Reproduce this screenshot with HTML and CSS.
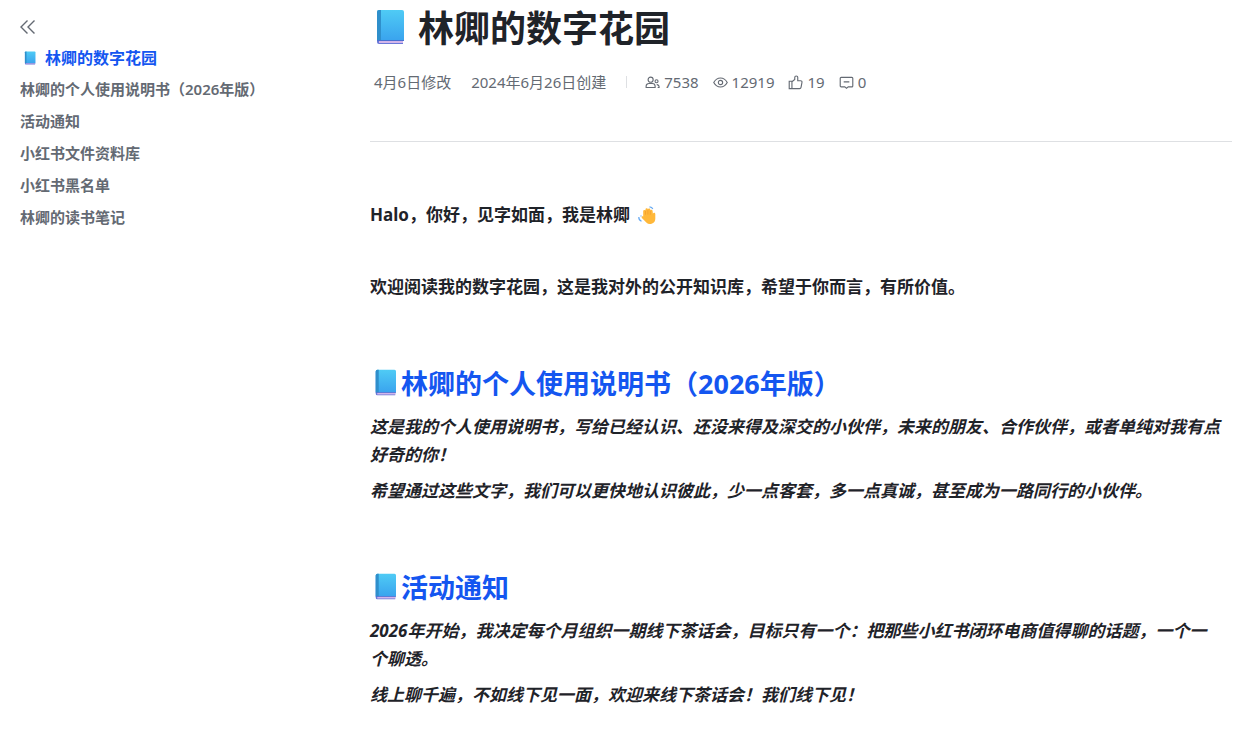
FILE: index.html
```html
<!DOCTYPE html>
<html lang="zh-CN">
  <head>
    <meta charset="UTF-8" />
    <title>林卿的数字花园</title>
    <meta name="viewport" content="width=device-width, initial-scale=1" />
    <link rel="stylesheet" href="styles.css">
  </head>
  <body>
    <svg class="defs" width="0" height="0" aria-hidden="true">
      <defs>
        <linearGradient id="cover" x1="0" y1="0" x2="0" y2="1">
          <stop offset="0" stop-color="#4fcbf5" />
          <stop offset="1" stop-color="#3aa4ee" />
        </linearGradient>
        <symbol id="book" viewBox="0 0 28 36">
          <path d="M1 4h26v31H3a2 2 0 0 1-2-2z" fill="#6a78d8" />
          <path d="M3 31h24v3H3z" fill="#d3b5ea" />
          <path d="M3 1h23a2 2 0 0 1 2 2v28H1V3a2 2 0 0 1 2-2z" fill="url(#cover)" />
          <path d="M3 1h2v30H1V3a2 2 0 0 1 2-2z" fill="#2f8fcb" />
          <path d="M1 31h27v1H1z" fill="#4a6fd0" />
        </symbol>
      </defs>
    </svg>

    <div class="page">
      <aside class="sidebar">
        <button class="collapse" aria-label="收起目录">
          <svg width="16" height="16" viewBox="0 0 16 16">
            <path d="M7.500 1.500L1 8l6.500 6.500M14.500 1.500L8 8l6.500 6.500" />
          </svg>
        </button>
        <nav class="toc">
          <a class="toc-title" href="#top"><svg class="book"><use href="#book" /></svg>林卿的数字花园</a>
          <a href="#manual">林卿的个人使用说明书（2026年版）</a>
          <a href="#events">活动通知</a>
          <a href="#library">小红书文件资料库</a>
          <a href="#blacklist">小红书黑名单</a>
          <a href="#notes">林卿的读书笔记</a>
        </nav>
      </aside>

      <main class="doc" id="top">
        <h1><svg class="book"><use href="#book" /></svg>林卿的数字花园</h1>
        <div class="meta">
          <span class="date">4月6日修改</span>
          <span class="date">2024年6月26日创建</span>
          <span class="divider"></span>
          <ul class="stats">
            <li>
              <svg viewBox="0 0 16 16">
                <circle cx="6" cy="5" r="2.700" />
                <path d="M1.200 13.300v-1.300a3 3 0 0 1 3-3h3.600a3 3 0 0 1 3 3v1.300z" />
                <circle cx="12.300" cy="6.700" r="1.600" />
                <path d="M12.500 10.300a2.300 2.300 0 0 1 2.500 2.300v.7h-1.500" />
              </svg>
              7538
            </li>
            <li>
              <svg viewBox="0 0 16 16">
                <path d="M.8 8C2.600 4.800 5 3.200 8 3.200S13.400 4.800 15.200 8C13.400 11.200 11 12.800 8 12.800S2.600 11.200.8 8z" />
                <circle cx="8" cy="8" r="2.300" />
              </svg>
              12919
            </li>
            <li>
              <svg viewBox="0 0 16 16">
                <path d="M1.300 6.700h2.900v7.800H1.300zM4.200 7.200L7.200 4.800V2.600a1.600 1.600 0 0 1 3.200 0v3.500h3a1.500 1.500 0 0 1 1.500 1.800l-1 5.300a1.600 1.600 0 0 1-1.600 1.300H4.200" />
              </svg>
              19
            </li>
            <li>
              <svg viewBox="0 0 16 16">
                <path d="M2.300 2.500h11.400a1 1 0 0 1 1 1v8.200a1 1 0 0 1-1 1H9.800L8 14.200l-1.800-1.500H2.300a1 1 0 0 1-1-1V3.500a1 1 0 0 1 1-1zM5 7.300h6" />
              </svg>
              0
            </li>
          </ul>
        </div>
        <hr />

        <section class="intro">
          <p>
            Halo，你好，见字如面，我是林卿
            <svg class="wave" viewBox="0 0 18 18">
              <path d="M5.200 8.800V5.200a1.200 1.200 0 0 1 2.300-.4V3.600a1.200 1.200 0 0 1 2.400-.2 1.200 1.200 0 0 1 2.400.5v.6a1.200 1.200 0 0 1 2.300.5l.3 2.800c.3-1.300 2.300-1.400 2.400.2v4.500a5.300 5.300 0 0 1-9 3.900L3.900 12c-.8-1 .2-2 1.300-1.500z" fill="#ffb83a" />
              <path d="M7.500 4.500v4.200M9.900 3.800v4.700M12.300 4.500v4.200" fill="none" stroke="#f0962a" stroke-width=".6" />
              <path d="M11.500.8c1.600 0 2.800.7 3.300 2.200M.8 11c-.1 2 .8 3.500 2.700 4.200M3 9.500v1" fill="none" stroke="#66a9f2" stroke-width="1.200" />
            </svg>
          </p>
          <p>欢迎阅读我的数字花园，这是我对外的公开知识库，希望于你而言，有所价值。</p>
        </section>

        <section class="entry" id="manual">
          <h2><svg class="book"><use href="#book" /></svg><a href="#manual">林卿的个人使用说明书（2026年版）</a></h2>
          <p>这是我的个人使用说明书，写给已经认识、还没来得及深交的小伙伴，未来的朋友、合作伙伴，或者单纯对我有点好奇的你！</p>
          <p>希望通过这些文字，我们可以更快地认识彼此，少一点客套，多一点真诚，甚至成为一路同行的小伙伴。</p>
        </section>

        <section class="entry" id="events">
          <h2><svg class="book"><use href="#book" /></svg><a href="#events">活动通知</a></h2>
          <p>2026年开始，我决定每个月组织一期线下茶话会，目标只有一个：把那些小红书闭环电商值得聊的话题，一个一个聊透。</p>
          <p>线上聊千遍，不如线下见一面，欢迎来线下茶话会！我们线下见！</p>
        </section>
      </main>
    </div>
  </body>
</html>
```

FILE: styles.css
```css
body {
  margin: 0;
  font-family: "Noto Sans", "Noto Sans CJK SC", sans-serif;
  background-color: #ffffff;
  color: #1f2329;
}
a {
  color: inherit;
  text-decoration: none;
}
.defs {
  position: absolute;
}
.page {
  display: flex;
  align-items: flex-start;
}
.sidebar {
  flex: 0 0 350px;
  padding: 16px 0 0 20px;
}
.collapse {
  display: block;
  padding: 3px 0;
  border: none;
  background: none;
  cursor: pointer;
}
.collapse svg {
  display: block;
  fill: none;
  stroke: #646a73;
  stroke-width: 1.4;
}
.toc {
  display: flex;
  flex-direction: column;
  margin-top: 5px;
}
.toc a {
  font-size: 15px;
  font-weight: 600;
  line-height: 32px;
  color: #646a73;
}
.toc .toc-title {
  display: flex;
  align-items: center;
  font-size: 16px;
  line-height: 30px;
  color: #1456f0;
}
.toc-title .book {
  width: 12px;
  height: 14px;
  margin: 0 9px 0 4px;
}
.doc {
  flex: 1;
  min-width: 0;
  padding: 5px 16px 24px 0;
}
h1 {
  display: flex;
  align-items: center;
  margin: 0;
  font-size: 36px;
  line-height: 48px;
}
h1 .book {
  width: 28px;
  height: 36px;
  margin: 0 14px 4px 6px;
}
.meta {
  display: flex;
  align-items: center;
  flex-wrap: wrap;
  padding: 17px 4px 19px;
  font-size: 15px;
  line-height: 24px;
  color: #646a73;
}
.date {
  margin-right: 20px;
}
.divider {
  width: 1px;
  height: 12px;
  margin-right: 18px;
  background-color: #dee0e3;
}
.stats {
  display: flex;
  gap: 14px;
  margin: 0;
  padding: 0;
  list-style: none;
}
.stats li {
  display: flex;
  align-items: center;
  gap: 4px;
}
.stats svg {
  width: 15px;
  height: 15px;
  fill: none;
  stroke: #646a73;
  stroke-width: 1.2;
}
hr {
  height: 1px;
  margin: 28px 0 59px;
  border: none;
  background-color: #dee0e3;
}
p {
  margin: 0 0 8px;
  padding-right: 10px;
  font-size: 17px;
  font-weight: 700;
  line-height: 28px;
}
.intro p {
  margin-bottom: 44px;
}
.wave {
  width: 18px;
  height: 18px;
  margin-left: 4px;
  vertical-align: -3px;
}
.entry {
  margin-top: 62px;
}
.entry p {
  font-style: italic;
}
h2 {
  display: flex;
  align-items: center;
  margin: 0 0 8px;
  font-size: 27px;
  line-height: 42px;
  color: #1456f0;
}
h2 .book {
  width: 21px;
  height: 27px;
  margin: 0 5px 4px;
}
```
